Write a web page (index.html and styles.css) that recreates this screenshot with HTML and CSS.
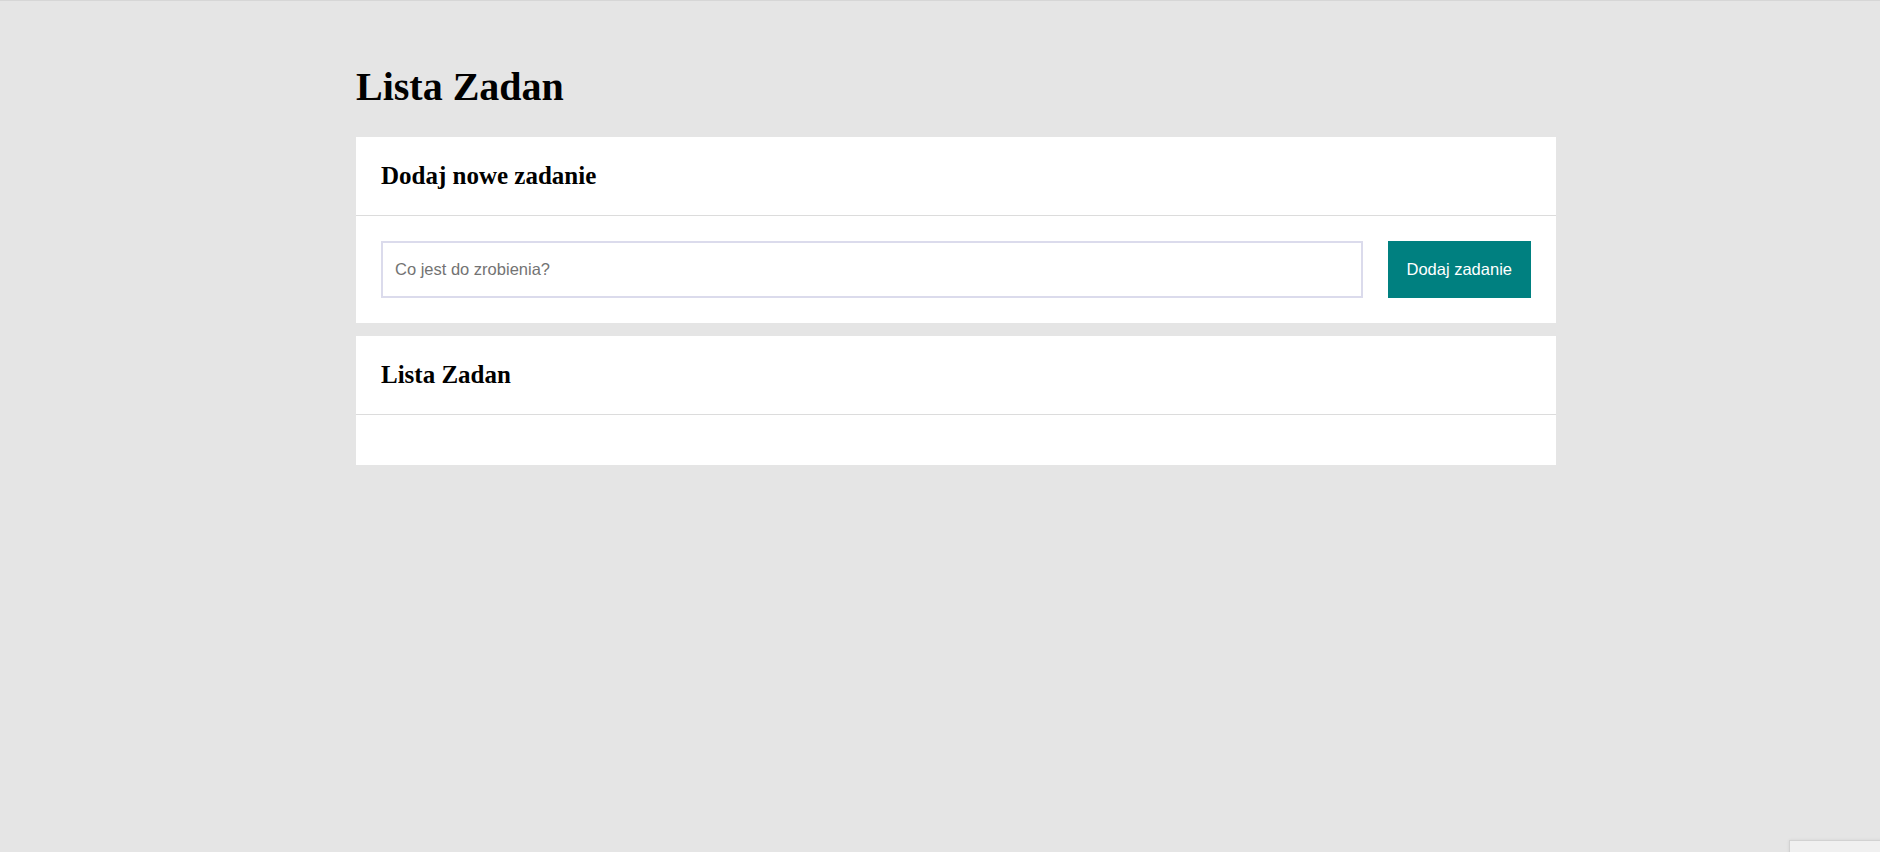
FILE: index.html
```html
<!DOCTYPE html>
<html lang="pl">
<head>
<meta charset="utf-8">
<title>Lista Zadan</title>
<link rel="stylesheet" href="styles.css">
</head>
<body>
<div class="container">
  <h1 class="page-title">Lista Zadan</h1>
  <section class="card">
    <div class="card-header"><h2>Dodaj nowe zadanie</h2></div>
    <div class="card-body">
      <form class="add-form">
        <input class="task-input" type="text" placeholder="Co jest do zrobienia?">
        <button class="add-btn" type="button">Dodaj zadanie</button>
      </form>
    </div>
  </section>
  <section class="card">
    <div class="card-header"><h2>Lista Zadan</h2></div>
    <div class="card-body">
      <ul class="task-list"></ul>
    </div>
  </section>
</div>
<div class="corner-badge"></div>
</body>
</html>
```

FILE: styles.css
```css
html {
  background: #e5e5e5;
}
body {
  margin: 0;
  border-top: 1px solid #d6d6d6;
  background: #e5e5e5;
  font-family: "Liberation Serif", "Times New Roman", serif;
  color: #000;
  min-height: 851px;
}
.container {
  max-width: 1200px;
  margin: 0 auto;
  padding: 36px 0 0 32px;
}
.page-title {
  font-size: 40px;
  font-weight: bold;
  margin: 27px 0 27px;
  line-height: 46px;
}
.card {
  background: #fff;
  margin-bottom: 13px;
}
.card-header {
  padding: 25px;
  border-bottom: 1px solid #dcdcdc;
}
.card-header h2 {
  margin: 0;
  font-size: 25px;
  line-height: 28px;
  font-weight: bold;
}
.card-body {
  padding: 25px;
}
.add-form {
  display: flex;
  gap: 25px;
  margin: 0;
}
.task-input {
  flex: 1;
  height: 57px;
  box-sizing: border-box;
  border: 2px solid #dbdbec;
  padding: 0 12px;
  font-family: "Liberation Sans", Arial, sans-serif;
  font-size: 16.5px;
  color: #333;
  outline: none;
  margin: 0;
}
.task-input::placeholder {
  color: #737373;
}
.add-btn {
  height: 57px;
  border: none;
  background: #008080;
  color: #fff;
  font-family: "Liberation Sans", Arial, sans-serif;
  font-size: 16.5px;
  padding: 0 19px;
  margin: 0;
  cursor: pointer;
}
.task-list {
  list-style: none;
  margin: 0;
  padding: 0;
}
.corner-badge {
  position: fixed;
  left: 1789px;
  top: 840px;
  width: 120px;
  height: 40px;
  background: #f0f0f0;
  border: 1px solid #d2d2d2;
  box-shadow: 0 0 3px rgba(0, 0, 0, 0.08);
}
```
